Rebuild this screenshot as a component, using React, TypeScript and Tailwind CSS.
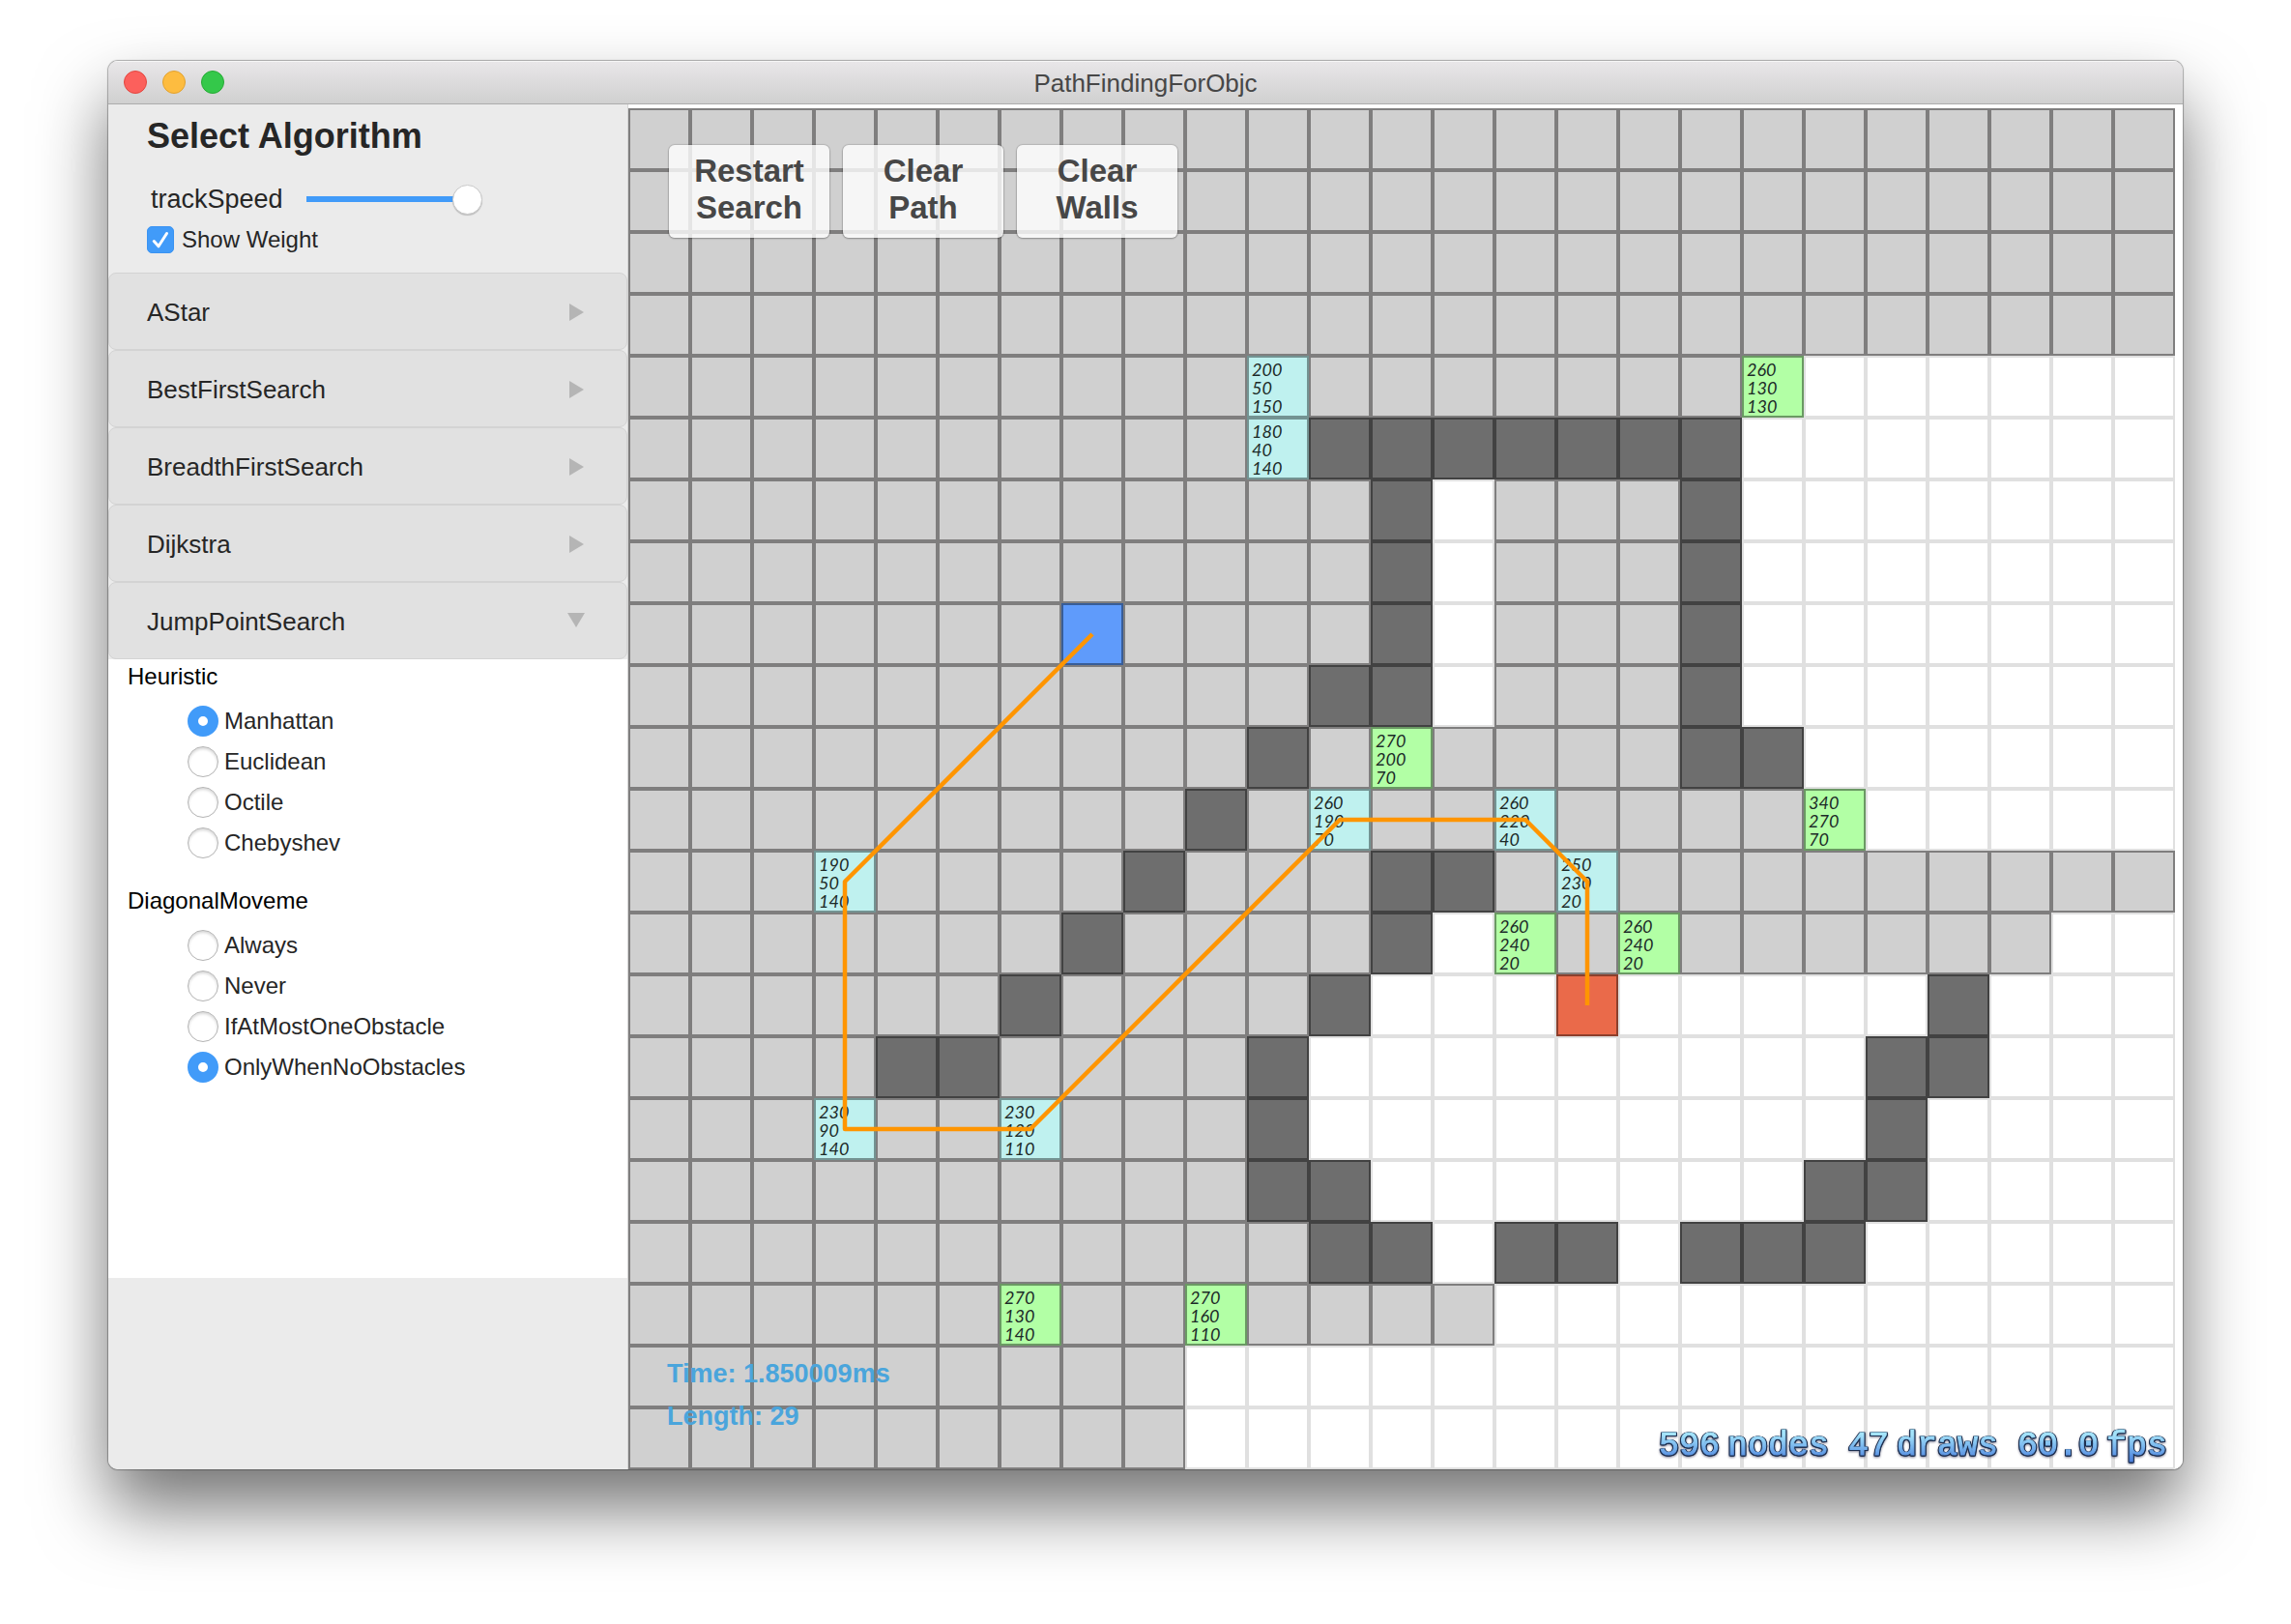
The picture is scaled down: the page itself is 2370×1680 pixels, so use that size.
import { Fragment } from "react";

type Kind = "." | "g" | "w" | "c" | "o" | "s" | "e";

const ROWS = [
  "ggggggggggggggggggggggggg",
  "ggggggggggggggggggggggggg",
  "ggggggggggggggggggggggggg",
  "ggggggggggggggggggggggggg",
  "ggggggggggcgggggggo......",
  "ggggggggggcwwwwwww.......",
  "ggggggggggggw.gggw.......",
  "ggggggggggggw.gggw.......",
  "gggggggsggggw.gggw.......",
  "gggggggggggww.gggw.......",
  "ggggggggggwgoggggww......",
  "gggggggggwgcggcggggo.....",
  "gggcggggwgggwwgcggggggggg",
  "gggggggwggggw.ogogggggg..",
  "ggggggwggggw...e.....w...",
  "ggggwwggggw.........ww...",
  "gggcggcgggw.........w....",
  "ggggggggggww.......ww....",
  "gggggggggggww.ww.www.....",
  "ggggggoggogggg...........",
  "ggggggggg................",
  "ggggggggg................",
];

const KINDS: Record<Kind, string> = {
  ".": "bg-white border-[#e0e0e0]",
  g: "bg-[#d0d0d0] border-[#7f7e7e]",
  w: "bg-[#6e6e6e] border-[#424242]",
  c: "bg-[#bff1ef] border-[#739392]",
  o: "bg-[#b2ffa5] border-[#6a9963]",
  s: "bg-[#5f9bfb] border-[#385d97]",
  e: "bg-[#ea6a4a] border-[#8c3f2c]",
};

const WEIGHTS: Record<string, number[]> = {
  "10,4": [200, 50, 150],
  "18,4": [260, 130, 130],
  "10,5": [180, 40, 140],
  "12,10": [270, 200, 70],
  "11,11": [260, 190, 70],
  "14,11": [260, 220, 40],
  "19,11": [340, 270, 70],
  "3,12": [190, 50, 140],
  "15,12": [250, 230, 20],
  "14,13": [260, 240, 20],
  "16,13": [260, 240, 20],
  "3,16": [230, 90, 140],
  "6,16": [230, 120, 110],
  "6,19": [270, 130, 140],
  "9,19": [270, 160, 110],
};

const PATH = [
  [7, 8],
  [3, 12],
  [3, 16],
  [6, 16],
  [11, 11],
  [14, 11],
  [15, 12],
  [15, 14],
];

const ALGORITHMS = ["AStar", "BestFirstSearch", "BreadthFirstSearch", "Dijkstra", "JumpPointSearch"];

function TitleBar() {
  return (
    <header className="grid h-[45px] grid-cols-[1fr_auto_1fr] items-center border-b border-[#acacac] bg-linear-to-b from-[#e9e7e9] to-[#d0d0d0] px-4 shadow-[inset_0_1px_0_#f6f6f6]">
      <div className="flex gap-4">
        <button aria-label="Close" className="size-6 rounded-full border border-[#e2463f] bg-[#fc605c]" />
        <button aria-label="Minimize" className="size-6 rounded-full border border-[#e1a12f] bg-[#fdbc40]" />
        <button aria-label="Zoom" className="size-6 rounded-full border border-[#27aa35] bg-[#34c84a]" />
      </div>
      <h1 className="pt-0.5 text-[26px] leading-8 text-[#474747]">PathFindingForObjc</h1>
    </header>
  );
}

function Radios({ title, name, options, selected }: { title: string; name: string; options: string[]; selected: string }) {
  return (
    <fieldset>
      <legend className="pl-5 text-2xl leading-9 text-black">{title}</legend>
      <div className="flex flex-col pt-[7px] pl-[82px]">
        {options.map((option) => (
          <label key={option} className="flex h-[42px] items-center gap-1.5 text-2xl">
            <input
              type="radio"
              name={name}
              defaultChecked={option === selected}
              className="size-8 appearance-none rounded-full border border-[#b4b4b4] bg-white shadow-[inset_0_2px_3px_rgba(0,0,0,0.16)] checked:border-[11px] checked:border-[#419bf9] checked:shadow-none"
            />
            {option}
          </label>
        ))}
      </div>
    </fieldset>
  );
}

function Sidebar() {
  return (
    <aside className="flex flex-col border-r border-[#d4d4d4] bg-[#ebebeb] text-[#262626]">
      <div className="flex h-[174px] flex-col pl-10">
        <h2 className="pt-3 text-4xl leading-[42px] font-bold">Select Algorithm</h2>
        <label className="mt-7 flex h-8 items-center gap-6 pl-1 text-[27px]">
          trackSpeed
          <input
            type="range"
            defaultValue={100}
            className="h-8 w-[182px] appearance-none bg-[linear-gradient(#419bf9,#419bf9)] bg-[length:170px_6px] bg-left bg-no-repeat [&::-webkit-slider-thumb]:size-[31px] [&::-webkit-slider-thumb]:appearance-none [&::-webkit-slider-thumb]:rounded-full [&::-webkit-slider-thumb]:border [&::-webkit-slider-thumb]:border-[#cacaca] [&::-webkit-slider-thumb]:bg-white [&::-webkit-slider-thumb]:shadow-[0_1px_1px_rgba(0,0,0,0.2)]"
          />
        </label>
        <div className="mt-3 flex items-center gap-2 text-2xl">
          <span className="grid size-7">
            <input
              id="weight"
              type="checkbox"
              defaultChecked
              className="col-start-1 row-start-1 size-7 appearance-none rounded-[5px] border border-[#3a93f2] bg-[#419bf9]"
            />
            <svg
              viewBox="0 0 28 28"
              className="pointer-events-none col-start-1 row-start-1 size-7"
              fill="none"
              stroke="white"
              strokeWidth="3"
              strokeLinecap="round"
              strokeLinejoin="round"
            >
              <path d="M7.300 15.500l4.700 5.300L20.500 7.500" />
            </svg>
          </span>
          <label htmlFor="weight" className="leading-7">
            Show Weight
          </label>
        </div>
      </div>
      {ALGORITHMS.map((name) => {
        const open = name === "JumpPointSearch";
        return (
          <button
            key={name}
            aria-expanded={open}
            className="flex h-20 items-center justify-between rounded-lg border border-[#d3d3d3] bg-[#e1e1e1] pt-0.5 pr-[43px] pl-[39px] text-[26px]"
          >
            {name}
            <svg viewBox="0 0 18 18" className="size-[18px]" fill="#b5b5b5">
              {open ? <path d="M0 0H18L9 15Z" /> : <path d="M2 0V18L17 9Z" />}
            </svg>
          </button>
        );
      })}
      <div className="flex h-[640px] flex-col gap-[21px] bg-white">
        <Radios title="Heuristic" name="heuristic" selected="Manhattan" options={["Manhattan", "Euclidean", "Octile", "Chebyshev"]} />
        <Radios
          title="DiagonalMoveme"
          name="diagonal"
          selected="OnlyWhenNoObstacles"
          options={["Always", "Never", "IfAtMostOneObstacle", "OnlyWhenNoObstacles"]}
        />
      </div>
    </aside>
  );
}

function Board() {
  return (
    <div className="grid grid-cols-[repeat(25,minmax(0,1fr))]">
      {ROWS.map((row, y) => (
        <Fragment key={y}>
          {[...row].map((kind, x) => (
            <div key={x} className={`aspect-square overflow-hidden border-2 pt-[3px] ${KINDS[kind as Kind]}`}>
              {WEIGHTS[`${x},${y}`]?.map((value, i) => (
                <div key={i} className="pl-[3px] font-[Lato] text-[18px] leading-[19px] text-[#1c2a28] italic">
                  {value}
                </div>
              ))}
            </div>
          ))}
        </Fragment>
      ))}
    </div>
  );
}

function Canvas() {
  return (
    <main className="bg-white pt-1 pr-2">
      <div className="relative">
        <Board />
        <svg
          viewBox="0 0 1600 1408"
          className="pointer-events-none absolute inset-0 size-full"
          fill="none"
          stroke="#ff9500"
          strokeWidth="4.500"
          strokeLinejoin="round"
        >
          <polyline points={PATH.map(([x, y]) => `${x * 64 + 32},${y * 64 + 32}`).join(" ")} />
        </svg>
        <div className="absolute top-[38px] left-[42px] flex gap-3.5">
          {["Restart Search", "Clear Path", "Clear Walls"].map((label) => (
            <button
              key={label}
              className="h-24 w-[166px] rounded-md bg-white/80 px-5 pb-1 text-[33px] leading-[38px] font-bold text-[#474747] shadow-[0_0_1px_1px_rgba(0,0,0,0.12),0_1px_2px_rgba(0,0,0,0.25)]"
            >
              {label}
            </button>
          ))}
        </div>
        <div className="absolute bottom-[33px] left-10 text-[27px] leading-[44px] font-bold text-[#4aa5dc]">
          <p>Time: 1.850009ms</p>
          <p>Length: 29</p>
        </div>
        <p className="absolute right-2 bottom-1 flex gap-5 font-['Liberation_Mono'] text-[35px] leading-10 [filter:drop-shadow(1px_0_0_#1d2f4f)_drop-shadow(-1px_0_0_#1d2f4f)_drop-shadow(0_1px_0_#1d2f4f)_drop-shadow(0_1px_1px_rgba(20,20,60,0.5))]">
          {[
            ["596", "nodes"],
            ["47", "draws"],
            ["60.0", "fps"],
          ].map(([count, unit]) => (
            <span
              key={unit}
              className="flex gap-2 bg-linear-to-b from-[#a4e4fb] from-20% to-[#4a7ddb] to-90% bg-clip-text text-transparent [-webkit-text-stroke:1px_transparent]"
            >
              <span>{count}</span> <span>{unit}</span>
            </span>
          ))}
        </p>
      </div>
    </main>
  );
}

export default function App() {
  return (
    <div className="min-h-screen bg-white px-28 pt-[63px] pb-40 font-['Liberation_Sans',sans-serif]">
      <div className="rounded-[10px] shadow-[0_0_1px_1px_rgba(0,0,0,0.3),0_40px_72px_rgba(0,0,0,0.55)]">
        <div className="overflow-hidden rounded-[10px]">
          <TitleBar />
          <div className="grid grid-cols-[538px_minmax(0,1fr)]">
            <Sidebar />
            <Canvas />
          </div>
        </div>
      </div>
    </div>
  );
}
